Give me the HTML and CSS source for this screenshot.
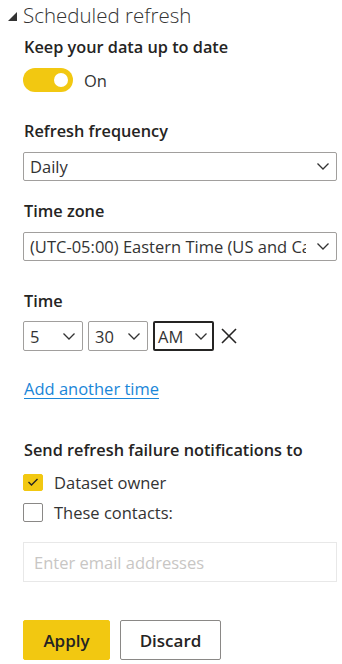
FILE: index.html
```html
<!DOCTYPE html>
<html lang="en">

<head>
    <meta charset="UTF-8">
    <meta name="viewport" content="width=device-width, initial-scale=1.0">
    <title>Scheduled refresh</title>
    <link rel="stylesheet" href="styles.css">
</head>

<body>
    <div class="panel">
        <!-- Section header -->
        <div class="section-head">
            <svg class="caret" width="9" height="9" viewBox="0 0 9 9"><polygon points="9,0 9,9 0,9" fill="#333" /></svg>
            <h2>Scheduled refresh</h2>
        </div>

        <div class="label first">Keep your data up to date</div>
        <div class="toggle-row">
            <span class="toggle"><span class="knob"></span></span>
            <span class="toggle-text">On</span>
        </div>

        <div class="label freq">Refresh frequency</div>
        <div class="select wide">
            <span>Daily</span>
            <svg class="chev" width="12" height="7" viewBox="0 0 12 7"><polyline points="0.5,0.5 6,6 11.5,0.5" /></svg>
        </div>

        <div class="label tz">Time zone</div>
        <div class="select wide">
            <span class="clip">(UTC-05:00) Eastern Time (US and Canada)</span>
            <svg class="chev" width="12" height="7" viewBox="0 0 12 7"><polyline points="0.5,0.5 6,6 11.5,0.5" /></svg>
        </div>

        <div class="label time">Time</div>
        <div class="time-row">
            <div class="select small">
                <span>5</span>
                <svg class="chev" width="12" height="7" viewBox="0 0 12 7"><polyline points="0.5,0.5 6,6 11.5,0.5" /></svg>
            </div>
            <div class="select small">
                <span>30</span>
                <svg class="chev" width="12" height="7" viewBox="0 0 12 7"><polyline points="0.5,0.5 6,6 11.5,0.5" /></svg>
            </div>
            <div class="select small focused">
                <span>AM</span>
                <svg class="chev" width="12" height="7" viewBox="0 0 12 7"><polyline points="0.5,0.5 6,6 11.5,0.5" /></svg>
            </div>
            <svg class="remove" width="16" height="16" viewBox="0 0 16 16">
                <line x1="1" y1="1" x2="15" y2="15" />
                <line x1="15" y1="1" x2="1" y2="15" />
            </svg>
        </div>

        <a class="add-link" href="#">Add another time</a>

        <div class="label notify">Send refresh failure notifications to</div>
        <div class="check-row">
            <span class="box checked">
                <svg width="12" height="10" viewBox="0 0 12 10"><polyline points="1.5,5 4.5,8 10.5,2" /></svg>
            </span>
            <span>Dataset owner</span>
        </div>
        <div class="check-row">
            <span class="box"></span>
            <span>These contacts:</span>
        </div>

        <div class="email">Enter email addresses</div>

        <div class="buttons">
            <button class="btn primary">Apply</button>
            <button class="btn">Discard</button>
        </div>
    </div>
</body>

</html>
```

FILE: styles.css
```css
* {
    margin: 0;
    padding: 0;
    box-sizing: border-box;
}

body {
    background-color: #ffffff;
    font-family: 'Open Sans', 'Noto Sans', sans-serif;
    color: #252423;
    font-size: 16.5px;
}

.panel {
    display: flex;
    flex-direction: column;
    align-items: flex-start;
    padding-left: 23px;
    width: 342px;
}

.section-head {
    display: flex;
    align-items: center;
    height: 30px;
    margin-left: -19px;
}

.caret {
    margin: 2px 6px 0 4px;
}

.section-head h2 {
    font-size: 20.5px;
    font-weight: 300;
    color: #333333;
    line-height: 30px;
}

.label {
    font-weight: 600;
    font-size: 16.3px;
    line-height: 22px;
    padding-left: 1px;
}

.label.first {
    margin-top: 6px;
}

.label.freq {
    margin-top: 28px;
}

.label.tz {
    margin-top: 19px;
}

.label.time {
    margin-top: 29px;
}

.label.notify {
    margin-top: 39px;
}

/* Toggle */
.toggle-row {
    display: flex;
    align-items: center;
    margin-top: 10px;
    height: 24px;
}

.toggle {
    width: 50px;
    height: 24px;
    border-radius: 12px;
    background-color: #f2c811;
    position: relative;
}

.knob {
    position: absolute;
    right: 5px;
    top: 5px;
    width: 14px;
    height: 14px;
    border-radius: 50%;
    background-color: #ffffff;
}

.toggle-text {
    margin-left: 11px;
    color: #333333;
}

/* Selects */
.select {
    display: flex;
    align-items: center;
    justify-content: space-between;
    border: 1px solid #a19f9d;
    border-radius: 2px;
    background-color: #ffffff;
    padding: 0 7px 0 6px;
    color: #333333;
}

.select.wide {
    width: 314px;
    height: 29px;
    margin-top: 10px;
}

.clip {
    white-space: nowrap;
    overflow: hidden;
    width: 276px;
}

.chev {
    flex-shrink: 0;
    fill: none;
    stroke: #333333;
    stroke-width: 1.3;
}

.time-row {
    display: flex;
    align-items: center;
    gap: 5px;
    margin-top: 9px;
}

.select.small {
    width: 60px;
    height: 30px;
}

.select.small.focused {
    width: 61px;
    border: 2px solid #252423;
    padding: 0 5px 0 3px;
}

.remove {
    margin-left: 2px;
    stroke: #252423;
    stroke-width: 1.6;
}

/* Link */
.add-link {
    margin-top: 27px;
    line-height: 22px;
    color: #1a86d8;
    padding-left: 1px;
    text-decoration: underline;
    text-underline-offset: 3px;
}

/* Checkboxes */
.check-row {
    display: flex;
    align-items: center;
    height: 20px;
    margin-top: 10px;
    color: #333333;
}

.label.notify + .check-row {
    margin-top: 11px;
}

.box {
    width: 20px;
    height: 19px;
    border: 1px solid #8a8886;
    border-radius: 2px;
    margin-right: 11px;
    display: flex;
    align-items: center;
    justify-content: center;
}

.box.checked {
    height: 17px;
    background-color: #f2c811;
    border-color: #f2c811;
}

.box svg {
    fill: none;
    stroke: #252423;
    stroke-width: 1.4;
}

/* Email */
.email {
    width: 314px;
    height: 40px;
    margin-top: 20px;
    border: 1px solid #e8e8e8;
    padding-left: 10px;
    display: flex;
    align-items: center;
    color: #c8c6c4;
}

/* Buttons */
.buttons {
    display: flex;
    gap: 10px;
    margin-top: 38px;
}

.btn {
    height: 40px;
    width: 101px;
    border: 1px solid #8a8886;
    border-radius: 2px;
    background-color: #ffffff;
    font-family: 'Open Sans', 'Noto Sans', sans-serif;
    font-size: 17px;
    font-weight: 600;
    color: #252423;
}

.btn.primary {
    width: 87px;
    background-color: #f2c811;
    border-color: #f2c811;
}
```
